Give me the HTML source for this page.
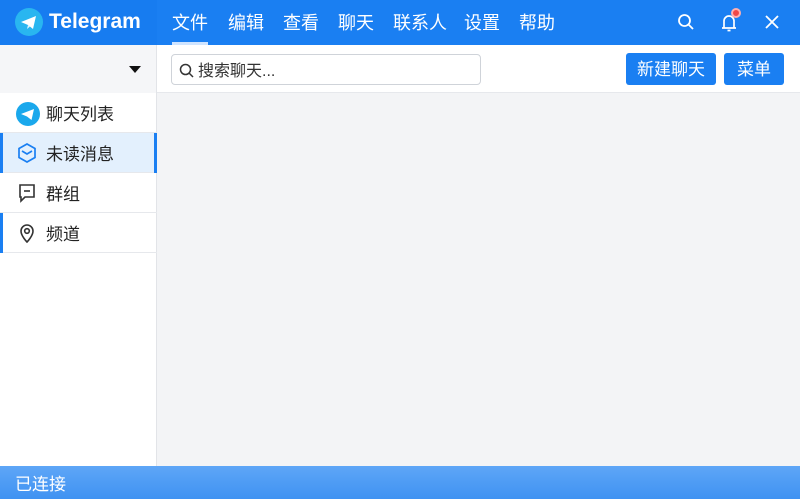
<!DOCTYPE html>
<html><head><meta charset="utf-8"><style>
*{margin:0;padding:0;box-sizing:border-box}
body{width:800px;height:499px;overflow:hidden;background:#f3f4f6;font-family:"Liberation Sans","Noto Sans CJK SC",sans-serif;position:relative}
.hdr{position:absolute;left:0;top:0;width:800px;height:45px;background:#1a7ff2}
.hdr .l{position:absolute;left:0;top:0;width:157px;height:45px;background:#177cf0}
.logo{position:absolute;left:15px;top:8px;width:28px;height:28px;border-radius:50%;background:#29b6f0}
.brand{position:absolute;left:49px;top:10px;color:#fff;font-size:21px;font-weight:bold}
.menu{position:absolute;top:9px;color:#fff;font-size:18px}
.ul{position:absolute;left:172px;top:42px;width:36px;height:3px;background:#cfe4ff}
.tb{position:absolute;left:0;top:45px;width:800px;height:48px;background:#fff;border-bottom:1px solid #e6e8ec}
.tb .l{position:absolute;left:0;top:0;width:157px;height:48px;background:#f5f6f8;border-right:1px solid #e2e4e8}
.search{position:absolute;left:171px;top:9px;width:310px;height:31px;border:1px solid #cfd3d9;border-radius:4px;background:#fff}
.search span{position:absolute;left:26px;top:2px;font-size:16px;color:#333}
.btn{position:absolute;top:8px;height:32px;background:#1a7ff2;color:#fff;font-size:17px;border-radius:3px;text-align:center;line-height:34px}
.side{position:absolute;left:0;top:93px;width:157px;height:373px;background:#fff;border-right:1px solid #e2e4e8}
.it{position:absolute;left:0;width:157px;height:40px;border-bottom:1px solid #e6e8ec;font-size:17px;color:#222}
.it span{position:absolute;left:46px;top:7px}
.it svg{position:absolute;left:16px;top:9px}
.st{position:absolute;left:0;top:466px;width:800px;height:33px;background:linear-gradient(#5ea6f7,#3f92f2)}
.st span{position:absolute;left:15px;top:4px;color:#fff;font-size:17px}
</style></head><body>
<div class="hdr"><div class="l"></div>
<div class="logo"><svg width="28" height="28" viewBox="0 0 28 28"><path d="M6 14 L21 8 L18 21 L13 17 Z" fill="#fff"/><path d="M13 17 L12 21 L15 18.5Z" fill="#e0f4ff"/></svg></div>
<div class="brand">Telegram</div>
<div class="menu" style="left:172px">文件</div>
<div class="menu" style="left:228px">编辑</div>
<div class="menu" style="left:283px">查看</div>
<div class="menu" style="left:338px">聊天</div>
<div class="menu" style="left:393px">联系人</div>
<div class="menu" style="left:464px">设置</div>
<div class="menu" style="left:519px">帮助</div>
<div class="ul"></div>
<svg style="position:absolute;left:677px;top:13px" width="18" height="18" viewBox="0 0 18 18" fill="none" stroke="#fff" stroke-width="1.8"><circle cx="7.5" cy="7.5" r="5.5"/><path d="M11.5 11.5L16 16"/></svg>
<svg style="position:absolute;left:718px;top:11px" width="22" height="22" viewBox="0 0 22 22" fill="none" stroke="#fff" stroke-width="1.7"><path d="M4 17h14M6 17V10a5 5 0 0 1 10 0v7M9.5 19.5h3"/></svg>
<div style="position:absolute;left:731px;top:8px;width:10px;height:10px;border-radius:50%;background:#f04848;border:2px solid #ffb0b0"></div>
<svg style="position:absolute;left:765px;top:15px" width="14" height="14" viewBox="0 0 14 14" stroke="#fff" stroke-width="1.8"><path d="M1 1L13 13M13 1L1 13"/></svg>
</div>
<div class="tb"><div class="l"><div style="position:absolute;left:129px;top:21px;border-left:6px solid transparent;border-right:6px solid transparent;border-top:7px solid #111"></div></div>
<div class="search"><svg style="position:absolute;left:7px;top:8px" width="15" height="15" viewBox="0 0 15 15" fill="none" stroke="#333" stroke-width="1.5"><circle cx="6.5" cy="6.5" r="5"/><path d="M10 10L14 14"/></svg><span>搜索聊天...</span></div>
<div class="btn" style="left:626px;width:90px">新建聊天</div>
<div class="btn" style="left:724px;width:60px">菜单</div>
</div>
<div class="side">
<div class="it" style="top:0"><svg width="24" height="24" viewBox="0 0 24 24"><circle cx="12" cy="12" r="12" fill="#1aa8ec"/><path d="M5 12 L18 7 L15.5 18 L11 14.5Z" fill="#fff"/></svg><span>聊天列表</span></div>
<div class="it" style="top:40px;background:#e3f0fd"><div style="position:absolute;left:0;top:0;width:3px;height:40px;background:#1a7ff2"></div><div style="position:absolute;right:0;top:0;width:3px;height:40px;background:#1a7ff2"></div><svg width="22" height="22" viewBox="0 0 22 22" fill="none" stroke="#1a7ff2" stroke-width="1.7"><path d="M11 2L19 6.5V15.5L11 20L3 15.5V6.5Z"/><path d="M6 9l5 3 5-3"/></svg><span>未读消息</span></div>
<div class="it" style="top:80px"><svg width="22" height="22" viewBox="0 0 22 22" fill="none" stroke="#333" stroke-width="1.6"><path d="M4 3h14v12H9l-4 4v-4H4z"/><path d="M8 9h6"/></svg><span>群组</span></div>
<div class="it" style="top:120px"><div style="position:absolute;left:0;top:0;width:3px;height:40px;background:#1a7ff2"></div><svg width="22" height="22" viewBox="0 0 22 22" fill="none" stroke="#333" stroke-width="1.6"><path d="M11 20s-6-6-6-11a6 6 0 0 1 12 0c0 5-6 11-6 11z"/><circle cx="11" cy="9" r="2.3"/></svg><span>频道</span></div>
</div>
<div class="st"><span>已连接</span></div>
</body></html>
